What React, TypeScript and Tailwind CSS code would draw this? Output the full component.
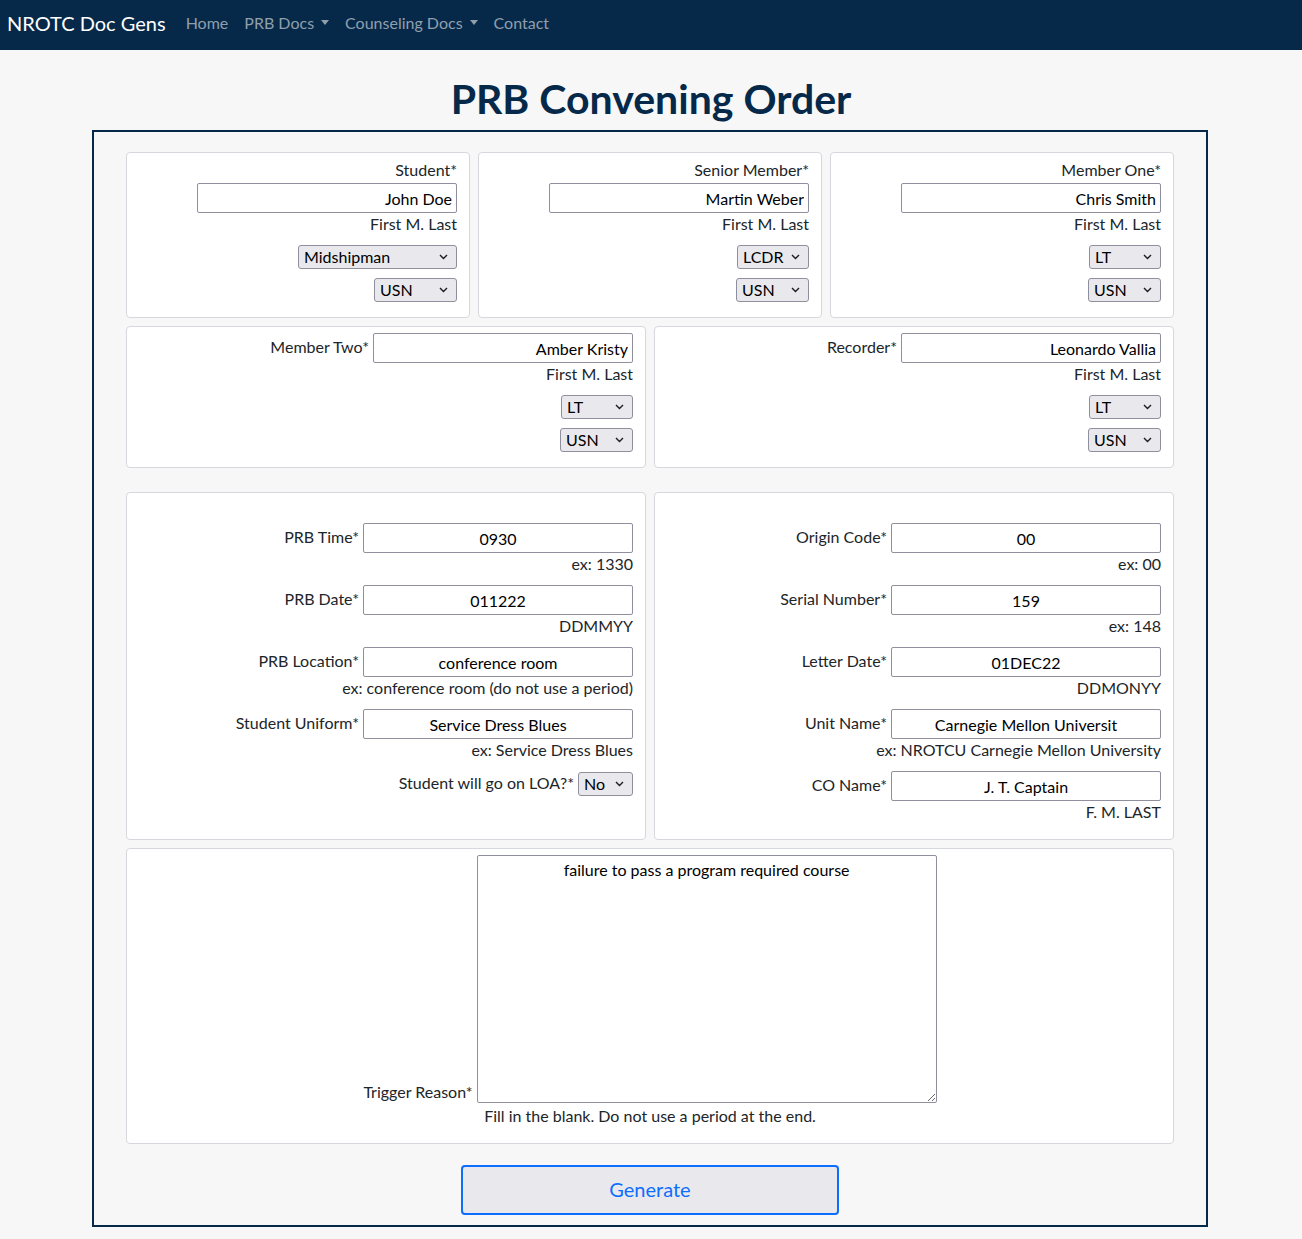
import { ReactNode } from "react";

const NAVY = "text-[#06294a]";

const Chevron = () => (
  <svg width="9" height="6" viewBox="0 0 9 6" className="pointer-events-none absolute right-[9px] top-1/2 -translate-y-1/2">
    <path d="M1 1l3.5 3.5L8 1" fill="none" stroke="#1c1c1c" strokeWidth="1.4" />
  </svg>
);

const Select = ({ value, w }: { value: string; w: string }) => (
  <div className={`relative h-[24px] ${w}`}>
    <select
      defaultValue={value}
      className="h-full w-full appearance-none rounded-[3px] border border-[#8f8f9d] bg-[#e9e9ed] pl-[5px] text-[16px] leading-[22px] text-black"
    >
      <option>{value}</option>
    </select>
    <Chevron />
  </div>
);

const Input = ({ value, w, center }: { value: string; w: string; center?: boolean }) => (
  <input
    defaultValue={value}
    className={`h-[30px] ${w} rounded-[2px] border border-[#8f8f9d] bg-white px-[4px] text-[16px] text-black ${
      center ? "text-center" : "text-right"
    }`}
  />
);

const Card = ({ className, children }: { className?: string; children: ReactNode }) => (
  <div className={`rounded-[4px] border border-[#d5d8dc] bg-white ${className ?? ""}`}>{children}</div>
);

const Hint = ({ children, className }: { children: ReactNode; className?: string }) => (
  <div className={`h-[24px] leading-[22px] ${className ?? ""}`}>{children}</div>
);

const StackedPerson = ({ label, name, rank, rankW }: { label: string; name: string; rank: string; rankW: string }) => (
  <Card className="flex flex-1 flex-col items-end pt-[6px] pr-[12px] pb-[15px]">
    <Hint>{label}</Hint>
    <Input value={name} w="w-[260px]" />
    <Hint>First M. Last</Hint>
    <div className="mt-[8px]">
      <Select value={rank} w={rankW} />
    </div>
    <div className="mt-[9px]">
      <Select value="USN" w={rank === "Midshipman" ? "w-[83px]" : "w-[73px]"} />
    </div>
  </Card>
);

const InlinePerson = ({ label, name }: { label: string; name: string }) => (
  <Card className="flex flex-1 flex-col items-end pt-[6px] pr-[12px] pb-[15px]">
    <div className="flex items-center gap-[4px]">
      <span className="-mt-[2px]">{label}</span>
      <Input value={name} w="w-[260px]" />
    </div>
    <Hint>First M. Last</Hint>
    <div className="mt-[8px]">
      <Select value="LT" w="w-[72px]" />
    </div>
    <div className="mt-[9px]">
      <Select value="USN" w="w-[73px]" />
    </div>
  </Card>
);

const Field = ({ label, value, hint, first }: { label: string; value: string; hint: string; first?: boolean }) => (
  <div className={`flex flex-col items-end ${first ? "" : "mt-[8px]"}`}>
    <div className="flex items-center gap-[4px]">
      <span className="-mt-[2px]">{label}</span>
      <Input value={value} w="w-[270px]" center />
    </div>
    <Hint>{hint}</Hint>
  </div>
);

export default function App() {
  return (
    <div className="min-h-screen bg-[#f7f7f7] font-['Lato','Open_Sans',sans-serif] text-[16px] text-[#212529]">
      <nav className="flex h-[50px] items-center bg-[#06294a] pb-[5px] pl-[7px]">
        <span className="mr-[20px] text-[20px] text-white">NROTC Doc Gens</span>
        <ul className="flex gap-[16px] text-[#8f9fad]">
          <li>Home</li>
          <li className="flex items-center">
            PRB Docs
            <span className="ml-[7px] inline-block border-x-[4px] border-t-[5px] border-x-transparent border-t-current" />
          </li>
          <li className="flex items-center">
            Counseling Docs
            <span className="ml-[7px] inline-block border-x-[4px] border-t-[5px] border-x-transparent border-t-current" />
          </li>
          <li>Contact</li>
        </ul>
      </nav>

      <h1 className={`pt-[25px] pb-[7px] text-center text-[41px] leading-[48px] font-bold ${NAVY}`}>
        PRB Convening Order
      </h1>

      <div className="ml-[92px] w-[1116px] border-2 border-[#06294a] px-[32px] pt-[20px] pb-[10px]">
        <div className="flex gap-[8px]">
          <StackedPerson label="Student*" name="John Doe" rank="Midshipman" rankW="w-[159px]" />
          <StackedPerson label="Senior Member*" name="Martin Weber" rank="LCDR" rankW="w-[72px]" />
          <StackedPerson label="Member One*" name="Chris Smith" rank="LT" rankW="w-[72px]" />
        </div>

        <div className="mt-[8px] flex gap-[8px]">
          <InlinePerson label="Member Two*" name="Amber Kristy" />
          <InlinePerson label="Recorder*" name="Leonardo Vallia" />
        </div>

        <div className="mt-[24px] flex gap-[8px]">
          <Card className="flex flex-1 flex-col pt-[30px] pr-[12px] pb-[14px]">
            <Field first label="PRB Time*" value="0930" hint="ex: 1330" />
            <Field label="PRB Date*" value="011222" hint="DDMMYY" />
            <Field label="PRB Location*" value="conference room" hint="ex: conference room (do not use a period)" />
            <Field label="Student Uniform*" value="Service Dress Blues" hint="ex: Service Dress Blues" />
            <div className="mt-[9px] flex items-center justify-end gap-[4px]">
              <span className="-mt-[2px]">Student will go on LOA?*</span>
              <Select value="No" w="w-[55px]" />
            </div>
          </Card>
          <Card className="flex flex-1 flex-col pt-[30px] pr-[12px] pb-[14px]">
            <Field first label="Origin Code*" value="00" hint="ex: 00" />
            <Field label="Serial Number*" value="159" hint="ex: 148" />
            <Field label="Letter Date*" value="01DEC22" hint="DDMONYY" />
            <Field label="Unit Name*" value="Carnegie Mellon Universit" hint="ex: NROTCU Carnegie Mellon University" />
            <Field label="CO Name*" value="J. T. Captain" hint="F. M. LAST" />
          </Card>
        </div>

        <Card className="mt-[8px] flex flex-col items-center pt-[6px] pb-[14px]">
          <div className="flex items-end gap-[4px]">
            <span className="leading-[22px]">Trigger Reason*</span>
            <textarea
              defaultValue="failure to pass a program required course"
              className="h-[248px] w-[460px] rounded-[2px] border border-[#8f8f9d] bg-white px-[4px] pt-[2px] text-center text-[16px] text-black"
            />
          </div>
          <Hint className="mt-[2px]">Fill in the blank. Do not use a period at the end.</Hint>
        </Card>

        <div className="mt-[21px] flex justify-center">
          <button className="h-[50px] w-[378px] rounded-[4px] border-2 border-[#0d6efd] bg-[#e9e9ed] pb-[2px] text-[20px] text-[#0d6efd]">
            Generate
          </button>
        </div>
      </div>
    </div>
  );
}
